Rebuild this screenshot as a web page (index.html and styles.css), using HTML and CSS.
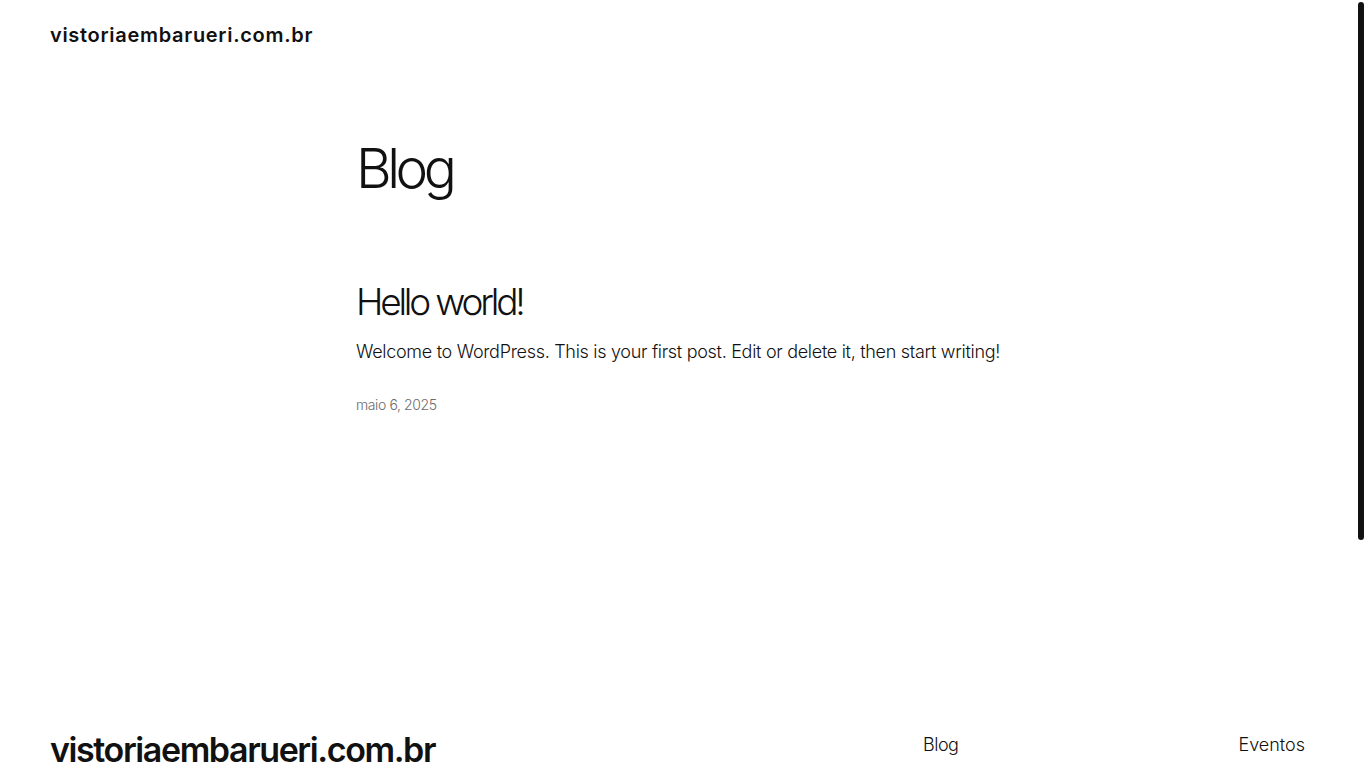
FILE: index.html
```html
<!DOCTYPE html>
<html lang="pt-BR">
<head>
<meta charset="utf-8">
<title>Blog – vistoriaembarueri.com.br</title>
<link rel="stylesheet" href="styles.css">
</head>
<body>
<div class="page">
  <header class="site-header">
    <a class="site-title" href="#">vistoriaembarueri.com.br</a>
  </header>
  <main class="content">
    <h1 class="page-title">Blog</h1>
    <article class="post">
      <h2 class="post-title"><a href="#">Hello world!</a></h2>
      <p class="post-excerpt">Welcome to WordPress. This is your first post. Edit or delete it, then start writing!</p>
      <time class="post-date">maio 6, 2025</time>
    </article>
  </main>
  <footer class="site-footer">
    <a class="footer-title" href="#">vistoriaembarueri.com.br</a>
    <nav class="footer-nav">
      <a href="#">Blog</a>
      <a href="#">Eventos</a>
    </nav>
  </footer>
</div>
<div class="scroll-thumb"></div>
</body>
</html>
```
FILE: styles.css
```css
html, body {
  margin: 0;
  padding: 0;
  background: #ffffff;
  overflow: hidden;
}
body {
  font-family: "Inter", "Noto Sans", sans-serif;
  color: #111111;
  height: 768px;
}
a {
  color: inherit;
  text-decoration: none;
}
.page {
  display: flex;
  flex-direction: column;
  height: 768px;
}
.site-header {
  padding: 25px 50px 0;
}
.site-title {
  font-size: 20px;
  line-height: 20px;
  font-weight: 600;
  letter-spacing: 0.7px;
  display: block;
}
.content {
  padding-left: 356px;
  flex: 1;
}
.page-title {
  margin: 96px 0 0;
  font-size: 55px;
  line-height: 55px;
  font-weight: 300;
  letter-spacing: -4.5px;
}
.post {
  display: flex;
  flex-direction: column;
  align-items: flex-start;
}
.post-title {
  margin: 87px 0 0;
  font-size: 37px;
  line-height: 37px;
  font-weight: 300;
  letter-spacing: -3.2px;
}
.post-excerpt {
  margin: 23px 0 0;
  font-size: 18px;
  line-height: 18px;
  font-weight: 300;
  letter-spacing: -0.3px;
}
.post-date {
  margin-top: 37px;
  font-size: 14px;
  line-height: 14px;
  font-weight: 300;
  letter-spacing: -0.4px;
  color: #6b6b6b;
}
.site-footer {
  display: flex;
  align-items: flex-start;
  padding: 3px 61px 0 50px;
  height: 35px;
}
.footer-title {
  font-size: 34px;
  line-height: 34px;
  font-weight: 600;
  letter-spacing: -1.4px;
  flex: 1;
}
.footer-nav {
  display: flex;
  gap: 280px;
  padding-top: 3px;
  font-size: 18px;
  line-height: 18px;
  font-weight: 300;
}
.footer-nav a:first-child {
  letter-spacing: -0.5px;
}
.scroll-thumb {
  position: fixed;
  top: 2px;
  right: 2px;
  width: 6px;
  height: 538px;
  border-radius: 3px;
  background: #111111;
}
```
